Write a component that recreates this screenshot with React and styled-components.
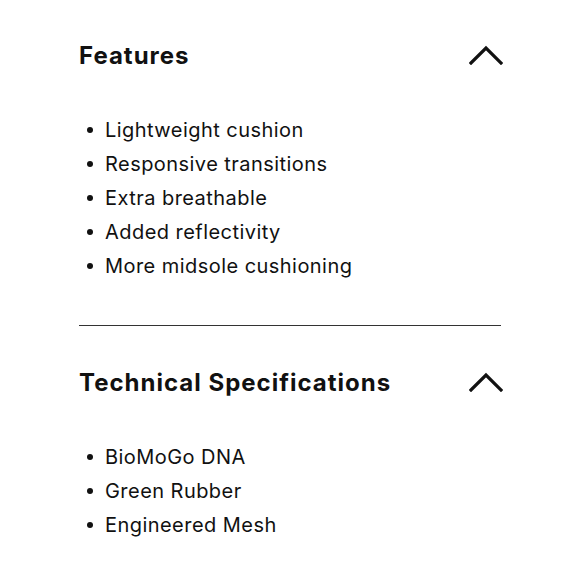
import React from 'react';
import styled, { createGlobalStyle } from 'styled-components';

const GlobalStyle = createGlobalStyle`
  body {
    margin: 0;
    background: #fff;
    font-family: 'Inter', 'Lato', sans-serif;
    color: #111;
  }
`;

const sections = [
  {
    title: 'Features',
    items: [
      'Lightweight cushion',
      'Responsive transitions',
      'Extra breathable',
      'Added reflectivity',
      'More midsole cushioning',
    ],
  },
  {
    title: 'Technical Specifications',
    items: ['BioMoGo DNA', 'Green Rubber', 'Engineered Mesh'],
  },
];

function Chevron() {
  return (
    <svg width="34" height="20" viewBox="0 0 34 20" fill="none">
      <polyline
        points="2,18 17,3 32,18"
        stroke="#111"
        strokeWidth="3.2"
        strokeLinecap="square"
        strokeLinejoin="miter"
      />
    </svg>
  );
}

export default function App() {
  return (
    <>
      <GlobalStyle />
      <Page>
        {sections.map((s, i) => (
          <Section key={s.title} last={i === sections.length - 1}>
            <Header>
              <Title>{s.title}</Title>
              <Toggle aria-label="Collapse">
                <Chevron />
              </Toggle>
            </Header>
            <List>
              {s.items.map((item) => (
                <Item key={item}>{item}</Item>
              ))}
            </List>
          </Section>
        ))}
      </Page>
    </>
  );
}

const Page = styled.div`
  width: 422px;
  margin: 0 auto;
`;

const Section = styled.section`
  padding: 39px 0 42px;
  border-bottom: ${(p) => (p.last ? 'none' : '1px solid #333')};
  & + & {
    padding-top: 40px;
  }
`;

const Header = styled.div`
  display: flex;
  justify-content: space-between;
  align-items: center;
  height: 32px;
`;

const Title = styled.h2`
  margin: 0;
  font-size: 24px;
  font-weight: 700;
  letter-spacing: 1px;
`;

const Toggle = styled.button`
  border: none;
  background: none;
  padding: 0;
  margin-right: -2px;
  display: flex;
  cursor: pointer;
`;

const List = styled.ul`
  list-style: none;
  margin: 42px 0 0;
  padding: 0 0 0 8px;
`;

const Item = styled.li`
  display: flex;
  align-items: center;
  height: 34px;
  font-size: 20px;
  font-weight: 400;
  letter-spacing: 0.45px;

  &::before {
    content: '';
    width: 6px;
    height: 6px;
    border-radius: 50%;
    background: #111;
    margin-right: 12px;
    flex-shrink: 0;
  }
`;
